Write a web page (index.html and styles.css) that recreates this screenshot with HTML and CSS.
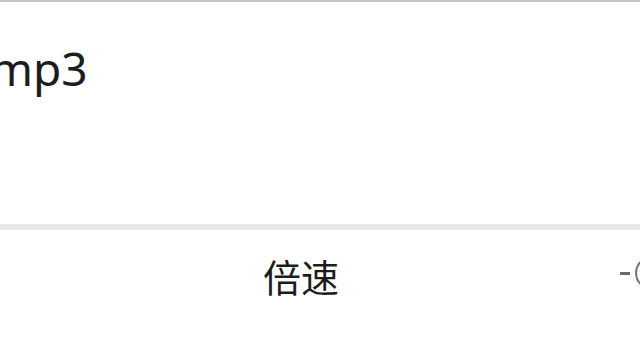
FILE: index.html
```html
<!DOCTYPE html>
<html lang="zh-CN">
<head>
    <meta charset="UTF-8">
    <meta name="viewport" content="width=device-width, initial-scale=1.0">
    <title>倍速</title>
    <link rel="stylesheet" href="styles.css">
</head>
<body>

    <div class="screen">
        <div class="top-line"></div>

        <!-- File name -->
        <div class="file-row">
            <span class="file-name">mp3</span>
        </div>

        <div class="divider"></div>

        <!-- Speed row -->
        <div class="speed-row">
            <span class="speed-label">倍速</span>
            <div class="stepper">
                <span class="stepper-dash"></span>
                <span class="stepper-btn"></span>
            </div>
        </div>
    </div>

</body>
</html>
```

FILE: styles.css
```css
body {
    margin: 0;
    background-color: #fff;
    font-family: 'Noto Sans', 'Noto Sans CJK SC', sans-serif;
    color: #1c1c1c;
}

.screen {
    width: 640px;
    height: 360px;
    overflow: hidden;
}

.top-line {
    height: 2px;
    background-color: #c4c4c4;
}

.file-row {
    box-sizing: border-box;
    height: 222px;
    padding-top: 35px;
}

.file-name {
    display: block;
    margin-left: -10px;
    font-size: 46px;
    line-height: normal;
}

.divider {
    height: 6px;
    background-color: #e8e8e8;
}

.speed-row {
    display: flex;
    align-items: center;
    height: 90px;
}

.speed-label {
    padding-left: 263px;
    font-size: 38px;
}

.stepper {
    display: flex;
    align-items: center;
    gap: 5px;
    margin-left: auto;
    margin-right: -29px;
    margin-top: -4px;
}

.stepper-dash {
    width: 10px;
    height: 3px;
    background-color: #6a6a6a;
}

.stepper-btn {
    width: 30px;
    height: 30px;
    border: 2px solid #777;
    border-radius: 50%;
}
```
